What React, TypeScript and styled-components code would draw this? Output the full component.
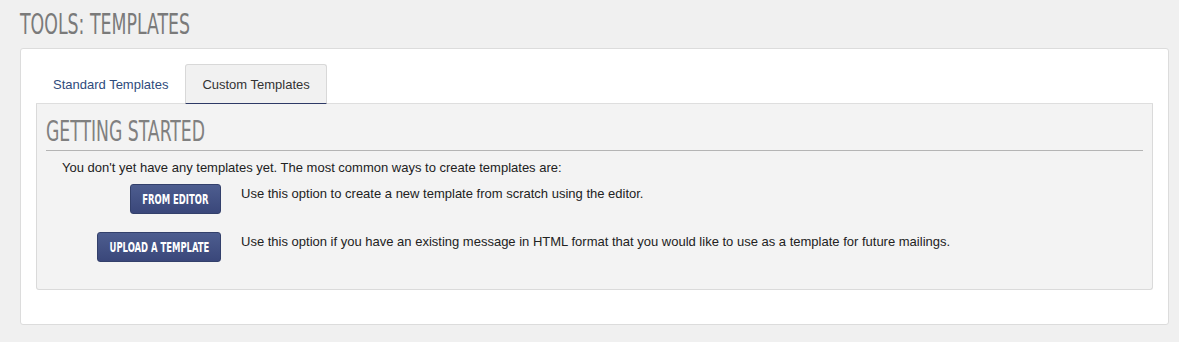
import React, { useState } from "react";
import styled, { createGlobalStyle } from "styled-components";

const GlobalStyle = createGlobalStyle`
    html, body {
        margin: 0;
        padding: 0;
        background: #f0f0f0;
    }
    body {
        font-family: "Liberation Sans", Arial, sans-serif;
        font-size: 13px;
        color: #222;
    }
`;

// no Oswald offline: squeeze the condensed DejaVu face instead
const condensed = `"DejaVu Sans Condensed", "Liberation Sans", sans-serif`;

const Page = styled.div`
    padding: 8px 10px 16px 20px;
`;

const PageTitle = styled.h1`
    margin: 0 0 8px;
    font-family: ${condensed};
    font-weight: normal;
    font-size: 29px;
    line-height: 32px;
    color: #7a7a7a;
    span {
        display: inline-block;
        transform: scaleX(0.665);
        transform-origin: left center;
    }
`;

const Card = styled.div`
    background: #fff;
    border: 1px solid #dcdcdc;
    border-radius: 3px;
    padding: 15px 15px 34px;
`;

const TabBar = styled.div`
    display: flex;
    align-items: flex-end;
    border-bottom: 1px solid #dedede;
`;

const Tab = styled.button<{ $active?: boolean }>`
    height: 40px;
    padding: 0 16px;
    font-family: "Liberation Sans", Arial, sans-serif;
    font-size: 13px;
    border: 1px solid ${(p) => (p.$active ? "#d8d8d8" : "transparent")};
    border-bottom: ${(p) => (p.$active ? "1px solid #2e3a66" : "1px solid transparent")};
    border-radius: 3px 3px 0 0;
    background: ${(p) => (p.$active ? "#f1f1f1" : "transparent")};
    color: ${(p) => (p.$active ? "#333" : "#2f4b7c")};
    margin-bottom: -1px;
    cursor: pointer;
`;

const Panel = styled.div`
    background: #f3f3f3;
    border: 1px solid #dadada;
    border-top: none;
    border-radius: 0 0 3px 3px;
    padding: 14px 9px 27px 9px;
`;

const SectionTitle = styled.h2`
    margin: 0;
    padding-bottom: 4px;
    border-bottom: 1px solid #b4b4b4;
    font-family: ${condensed};
    font-weight: normal;
    font-size: 28px;
    line-height: 28px;
    color: #808080;
    span {
        display: inline-block;
        transform: scaleX(0.685);
        transform-origin: left center;
    }
`;

const Intro = styled.p`
    margin: 9px 0 0 16px;
    line-height: 16px;
`;

const Options = styled.div`
    display: grid;
    grid-template-columns: 175px 1fr;
    column-gap: 20px;
    row-gap: 18px;
    margin-top: 8px;
`;

const ButtonCell = styled.div`
    display: flex;
    justify-content: flex-end;
`;

const ActionButton = styled.button<{ $width: number }>`
    width: ${(p) => p.$width}px;
    height: 30px;
    padding: 0;
    display: flex;
    align-items: center;
    justify-content: center;
    border: 1px solid #33406b;
    border-radius: 3px;
    background: linear-gradient(#4d5d8f, #3a477a);
    color: #fff;
    font-family: ${condensed};
    font-size: 14px;
    font-weight: bold;
    white-space: nowrap;
    overflow: visible;
    cursor: pointer;
    span {
        display: inline-block;
        transform: scaleX(0.67);
    }
`;

const Description = styled.div`
    padding-top: 2px;
    line-height: 16px;
`;

const options = [
    { label: "FROM EDITOR", width: 91, text: "Use this option to create a new template from scratch using the editor." },
    {
        label: "UPLOAD A TEMPLATE",
        width: 124,
        text: "Use this option if you have an existing message in HTML format that you would like to use as a template for future mailings.",
    },
];

const App = () => {
    const [tab, setTab] = useState("custom");

    return (
        <Page>
            <GlobalStyle />
            <PageTitle>
                <span>TOOLS: TEMPLATES</span>
            </PageTitle>
            <Card>
                <TabBar>
                    <Tab $active={tab === "standard"} onClick={() => setTab("standard")}>
                        Standard Templates
                    </Tab>
                    <Tab $active={tab === "custom"} onClick={() => setTab("custom")}>
                        Custom Templates
                    </Tab>
                </TabBar>
                <Panel>
                    <SectionTitle>
                        <span>GETTING STARTED</span>
                    </SectionTitle>
                    <Intro>You don't yet have any templates yet. The most common ways to create templates are:</Intro>
                    <Options>
                        {options.map((o) => (
                            <React.Fragment key={o.label}>
                                <ButtonCell>
                                    <ActionButton $width={o.width}>
                                        <span>{o.label}</span>
                                    </ActionButton>
                                </ButtonCell>
                                <Description>{o.text}</Description>
                            </React.Fragment>
                        ))}
                    </Options>
                </Panel>
            </Card>
        </Page>
    );
};

export default App;
